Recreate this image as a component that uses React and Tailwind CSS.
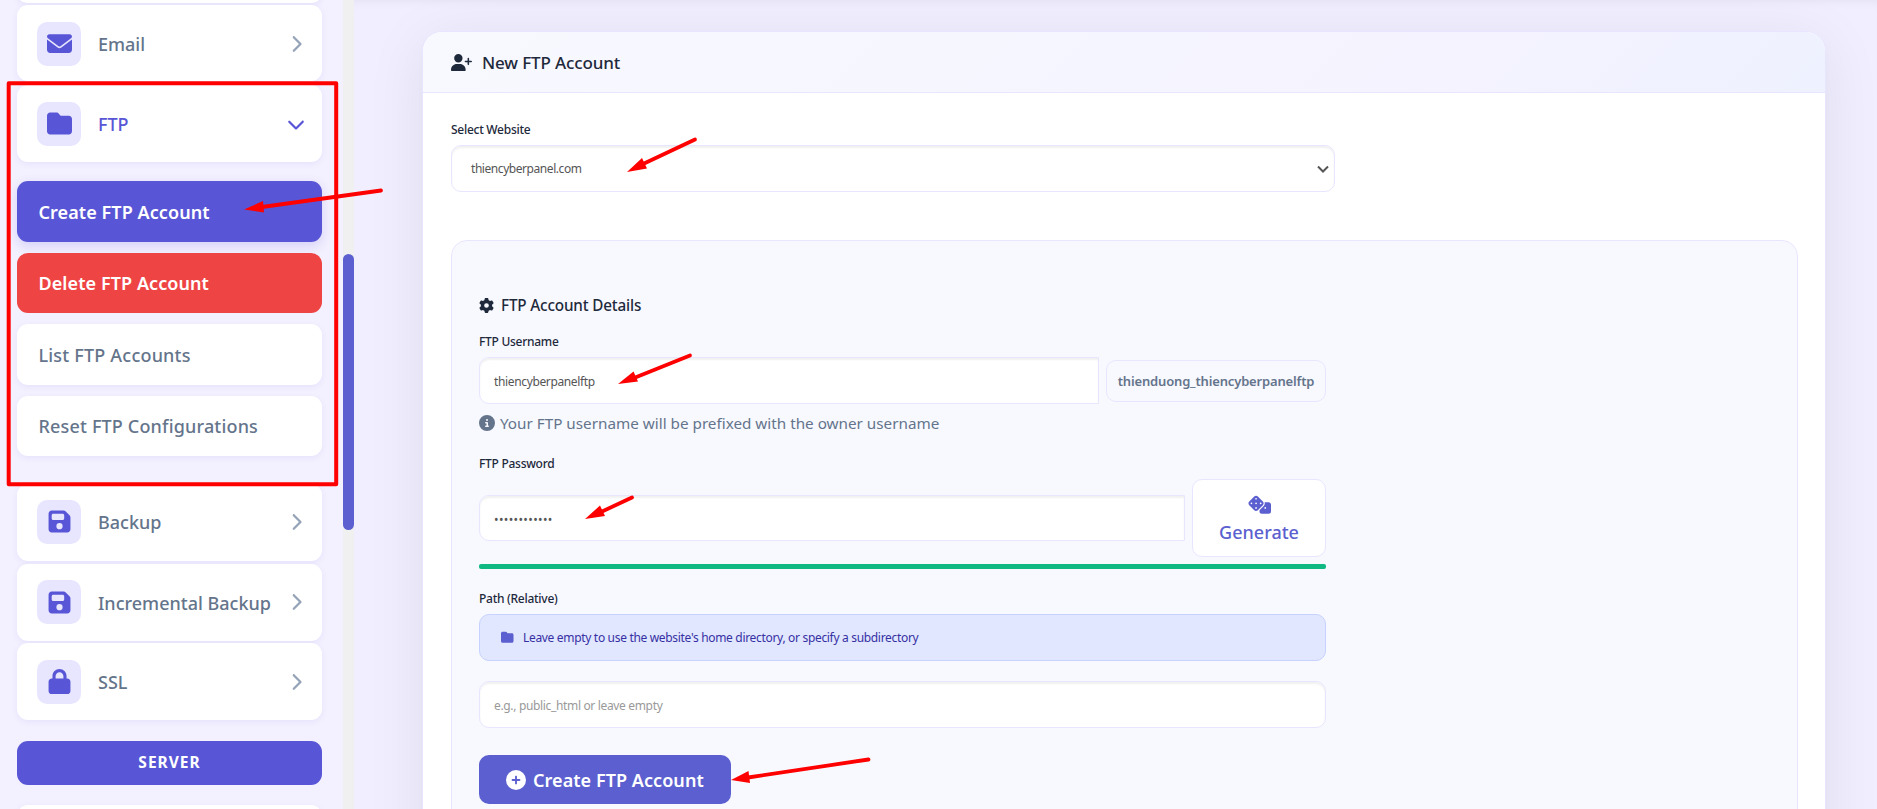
import {
  FaChevronDown,
  FaChevronRight,
  FaCircleInfo,
  FaCirclePlus,
  FaDice,
  FaEnvelope,
  FaFloppyDisk,
  FaFolder,
  FaGear,
  FaLock,
  FaUserPlus,
} from 'react-icons/fa6';
import clsx from 'clsx';

const cardShadow = 'shadow-[0_2px_6px_rgba(88,86,214,0.08)]';
const inputBase =
  'flex items-center border border-[#e8e6ff] bg-white shadow-[inset_0_2px_2px_rgba(0,0,0,0.06)]';

function MenuCard({ icon: Icon, label, open = false, className }) {
  return (
    <a className={clsx('flex shrink-0 items-center rounded-[11px] bg-white pr-5 pl-5', cardShadow, className)}>
      <span className="flex size-11 items-center justify-center rounded-[10px] bg-[#e8e6ff] text-[#5856d6]">
        <Icon className="size-[25px]" />
      </span>
      <span
        className={clsx(
          'ml-[17px] flex-1 pt-px text-[18px] leading-6 font-medium whitespace-nowrap',
          open ? 'text-[#5856d6]' : 'text-[#64748b]',
        )}
      >
        {label}
      </span>
      {open ? (
        <FaChevronDown className="mr-[-3px] size-[18px] text-[#5856d6]" />
      ) : (
        <FaChevronRight className="mr-[-3px] size-[18px] text-[#94a3b8]" />
      )}
    </a>
  );
}

function SubItem({ label, className }) {
  return (
    <a
      className={clsx(
        'flex shrink-0 items-center rounded-[11px] pl-[21.5px] text-[18px] whitespace-nowrap',
        className,
      )}
    >
      {label}
    </a>
  );
}

function Sidebar() {
  return (
    <nav className="flex w-[343px] shrink-0 flex-col overflow-hidden bg-[#f3f0ff] pr-[21px] pl-[17px]">
      <div className={clsx('mt-[-17px] h-5 shrink-0 rounded-[11px] bg-white', cardShadow)} />
      <MenuCard icon={FaEnvelope} label="Email" className="mt-0.5 h-[76px] pt-px" />
      <MenuCard icon={FaFolder} label="FTP" open className="mt-1 h-[77px]" />
      <SubItem
        label="Create FTP Account"
        className="mt-[19px] h-[61px] bg-[#5856d6] pt-0.5 font-semibold tracking-[0.08px] text-white shadow-[0_4px_12px_rgba(88,86,214,0.2)]"
      />
      <SubItem
        label="Delete FTP Account"
        className="mt-[11px] h-[60px] bg-[#ef4444] font-semibold tracking-[0.08px] text-white"
      />
      <SubItem
        label="List FTP Accounts"
        className={clsx('mt-[11px] h-[61px] bg-white pt-0.5 font-medium tracking-[0.2px] text-[#64748b]', cardShadow)}
      />
      <SubItem
        label="Reset FTP Configurations"
        className={clsx('mt-[11px] h-[60px] bg-white font-medium tracking-[0.17px] text-[#64748b]', cardShadow)}
      />
      <MenuCard icon={FaFloppyDisk} label="Backup" className="mt-[28px] h-[77px] pb-0.5" />
      <MenuCard icon={FaFloppyDisk} label="Incremental Backup" className="mt-[3px] h-[77px] pb-px" />
      <MenuCard icon={FaLock} label="SSL" className="mt-0.5 h-[77px]" />
      <div className="mt-[21px] flex h-11 shrink-0 items-center justify-center rounded-[11px] bg-[#5856d6] text-[15.5px] font-bold tracking-[1px] text-white">
        SERVER
      </div>
      <div className={clsx('mt-5 h-[77px] shrink-0 rounded-[11px] bg-white', cardShadow)} />
    </nav>
  );
}

function ScrollTrack() {
  return (
    <div className="w-[11px] shrink-0 bg-[#f0f0f0] pt-[254px]">
      <div className="h-[276px] w-[11px] rounded-full bg-[#5b5fcf]" />
    </div>
  );
}

function Label({ children, className }) {
  return (
    <label
      className={clsx('block text-[12px] leading-5 font-medium tracking-[-0.27px] text-[#1e293b]', className)}
    >
      {children}
    </label>
  );
}

function AccountDetails() {
  return (
    <section className="mt-12 h-[700px] rounded-[16px] border border-[#e8e6ff] bg-[#f8f9ff] pt-[52px] pl-[27px]">
      <div className="w-[847px]">
        <h3 className="flex h-6 items-center gap-[7px] text-[15.25px] font-medium tracking-[-0.16px] text-[#1e293b]">
          <FaGear className="size-[15px]" />
          FTP Account Details
        </h3>

        <Label className="mt-[15px]">FTP Username</Label>
        <div className="mt-[5px] flex items-center gap-[7px]">
          <div
            className={clsx(
              inputBase,
              'h-[47px] flex-1 rounded-l-[10px] pt-[3px] pl-[14px] text-[12px] tracking-[-0.36px] text-[#555555]',
            )}
          >
            thiencyberpanelftp
          </div>
          <div className="flex h-[42px] w-[220px] items-center justify-center rounded-[10px] border border-[#e8e6ff] pt-0.5 text-[13px] font-semibold tracking-[-0.16px] text-[#64748b]">
            thienduong_thiencyberpanelftp
          </div>
        </div>
        <p className="mt-[7px] flex h-6 items-center gap-[5px] text-[15.25px] text-[#64748b]">
          <FaCircleInfo className="size-4" />
          Your FTP username will be prefixed with the owner username
        </p>

        <Label className="mt-[19px]">FTP Password</Label>
        <div className="mt-[5px] flex items-center gap-[7px]">
          <div
            className={clsx(
              inputBase,
              'h-[46px] flex-1 rounded-l-[10px] pt-[3px] pl-[14px] text-[12px] tracking-[0.38px] text-[#555555]',
            )}
          >
            ••••••••••••
          </div>
          <button className="flex h-[78px] w-[134px] flex-col items-center rounded-[10px] border border-[#e8e6ff] bg-white pt-[13px] text-[#5b5fcf]">
            <FaDice className="size-[23px]" />
            <span className="mt-[4px] text-[18px] leading-6 font-medium">Generate</span>
          </button>
        </div>
        <div className="mt-[7px] h-[5px] rounded-[2px] bg-[#10b981]" />

        <Label className="mt-5">Path (Relative)</Label>
        <div className="mt-[5px] flex h-[47px] items-center gap-[9.500px] rounded-[10px] border border-[#c7d2fe] bg-[#e0e7ff] pl-[21px] text-[12px] tracking-[-0.32px] text-[#3730a3]">
          <FaFolder className="size-[12.5px] text-[#5b5fcf]" />
          Leave empty to use the website's home directory, or specify a subdirectory
        </div>
        <div
          className={clsx(
            inputBase,
            'mt-5 h-[47px] rounded-[10px] pt-[3px] pl-[14px] text-[12px] tracking-[-0.34px] text-[#999999]',
          )}
        >
          e.g., public_html or leave empty
        </div>

        <button className="mt-[27px] flex h-[49px] w-[252px] items-center gap-[7px] rounded-[10px] bg-[#5b5fcf] pt-px pl-[27px] text-[18px] font-semibold tracking-[0.06px] whitespace-nowrap text-white">
          <FaCirclePlus className="size-5" />
          Create FTP Account
        </button>
      </div>
    </section>
  );
}

function Main() {
  return (
    <main className="flex-1 overflow-hidden bg-[#f0eeff] shadow-[inset_0_8px_10px_-6px_rgba(0,0,0,0.05)]">
      <div className="mt-[31px] mr-[51px] ml-[68px] h-[900px] rounded-[20px] border border-[#e8e6ff] bg-white shadow-[0_4px_6px_rgba(0,0,0,0.02),0_10px_60px_rgba(0,0,0,0.08)]">
        <header className="flex h-[61px] items-center gap-[10px] rounded-t-[19px] border-b border-[#e8e6ff] bg-linear-135 from-[#f8f9ff] via-[#f4f3ff] via-75% to-[#eef1ff] pt-px pl-7 text-[17px] font-medium tracking-[-0.13px] text-[#1e293b]">
          <FaUserPlus className="size-[21px]" />
          New FTP Account
        </header>
        <div className="pt-[27px] pr-[27px] pl-7">
          <Label>Select Website</Label>
          <div
            className={clsx(
              inputBase,
              'mt-[5px] h-[47px] w-[884px] justify-between rounded-[10px] pt-px pr-1 pl-[19px] text-[12px] tracking-[-0.44px] text-[#555555]',
            )}
          >
            thiencyberpanel.com
            <svg viewBox="0 0 14 9" className="h-[9px] w-[14px] fill-none stroke-[#555555] stroke-2">
              <path d="M2 1.500 7 6.500l5-5" />
            </svg>
          </div>
          <AccountDetails />
        </div>
      </div>
    </main>
  );
}

const arrows = [
  { from: [381, 190.5], neck: [262, 207], head: '244,209.500 263,201 264,212.500' },
  { from: [695, 139.5], neck: [643, 164], head: '627,172 642,158 647,168.500' },
  { from: [690, 355.5], neck: [634, 378], head: '618,384 633.500,371.500 638,381.500' },
  { from: [632, 497.5], neck: [601, 512], head: '585,519 600,505.500 605,516' },
  { from: [868.5, 759.5], neck: [748, 777.5], head: '731,780 748.500,771 750,783' },
];

function Annotations() {
  return (
    <svg viewBox="0 0 1877 809" className="pointer-events-none absolute inset-0 h-[809px] w-[1877px]">
      <rect x="8.700" y="83.300" width="327.500" height="401" fill="none" stroke="#ff0000" strokeWidth="4" strokeLinejoin="round" />
      {arrows.map(({ from, neck, head }) => (
        <g key={head} fill="#ff0000" stroke="#ff0000">
          <line x1={from[0]} y1={from[1]} x2={neck[0]} y2={neck[1]} strokeWidth="3.800" strokeLinecap="round" />
          <polygon points={head} stroke="none" />
        </g>
      ))}
    </svg>
  );
}

export default function App() {
  return (
    <div className="relative flex h-[809px] w-[1877px] overflow-hidden font-['Noto_Sans','Open_Sans',sans-serif]">
      <Sidebar />
      <ScrollTrack />
      <Main />
      <Annotations />
    </div>
  );
}
